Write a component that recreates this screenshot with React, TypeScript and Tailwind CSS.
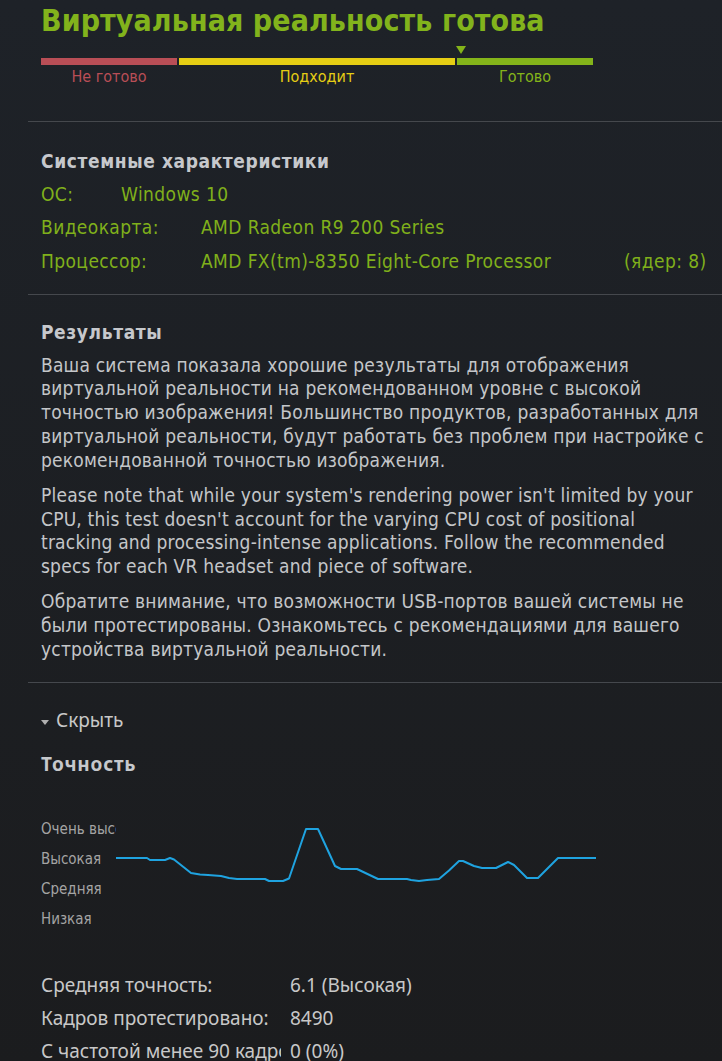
const cond = { fontFamily: "'DejaVu Sans Condensed', 'Liberation Sans Narrow', sans-serif" };
const wide = { fontFamily: "'Noto Sans', 'Open Sans', sans-serif" };

const points: [number, number][] = [
  [0, 43], [31, 43], [34, 45], [49, 45], [54, 43], [58, 44.5], [75, 58], [84, 59.5],
  [92, 60], [105, 61], [113, 63], [121, 64], [149, 64], [153, 66], [167, 66], [173, 63.5],
  [190, 14], [202, 14], [219, 51], [225, 54], [241, 54], [262, 64], [291, 64], [295, 65],
  [303, 66], [311, 65], [323, 64], [333, 55.5], [343, 46], [347, 46], [358, 51], [366, 53],
  [380, 53], [392, 47], [398, 50], [411, 63], [422, 63], [442, 43], [480, 43],
];

function Divider() {
  return <div className="h-px bg-[#45484d]" />;
}

function SpecRow({ label, value, extra, labelWidth }: { label: string; value: string; extra?: string; labelWidth: string }) {
  return (
    <div className="flex h-[33.5px] items-center whitespace-nowrap">
      <span className={labelWidth}>{label}</span>
      <span className="w-[423px]">{value}</span>
      {extra && <span>{extra}</span>}
    </div>
  );
}

export default function App() {
  return (
    <div className="min-h-screen overflow-hidden bg-linear-to-b from-[#1e2228] to-[#1b1c1e] pl-[28px]">
      {/* header */}
      <div className="pl-[13px] pt-[3px] pb-[34px]" style={cond}>
        <h1 className="text-[30px] font-bold leading-[36px] tracking-[0.1px] text-[#82b31c] whitespace-nowrap">
          Виртуальная реальность готова
        </h1>
        <div className="relative mt-[7px] w-[552px] pt-[12px]">
          <div className="absolute left-[415px] top-0 h-0 w-0 border-x-[5.5px] border-t-[8px] border-x-transparent border-t-[#84b41a]" />
          <div className="flex gap-[2px]">
            <div className="flex w-[136px] flex-col items-center">
              <div className="h-[7px] w-full bg-[#b94e56]" />
              <span className="mt-[2px] text-[16px] leading-[20px] text-[#b94e56]">Не готово</span>
            </div>
            <div className="flex w-[276px] flex-col items-center">
              <div className="h-[7px] w-full bg-[#e6ce14]" />
              <span className="mt-[2px] text-[16px] leading-[20px] text-[#e6ce14]">Подходит</span>
            </div>
            <div className="flex w-[136px] flex-col items-center">
              <div className="h-[7px] w-full bg-[#84b41a]" />
              <span className="mt-[2px] text-[16px] leading-[20px] text-[#84b41a]">Готово</span>
            </div>
          </div>
        </div>
      </div>

      <Divider />

      {/* system specs */}
      <div className="pl-[13px] pt-[27px] pb-[16px]" style={cond}>
        <h2 className="text-[19px] font-bold leading-[24px] tracking-[0.6px] text-[#c6c8cc]">Системные характеристики</h2>
        <div className="mt-[4px] text-[19px] tracking-[0.4px] text-[#80b01b]">
          <div className="flex h-[33.5px] items-center whitespace-nowrap">
            <span className="w-[80px]">ОС:</span>
            <span>Windows 10</span>
          </div>
          <SpecRow label="Видеокарта:" value="AMD Radeon R9 200 Series" labelWidth="w-[160px]" />
          <SpecRow label="Процессор:" value="AMD FX(tm)-8350 Eight-Core Processor" extra="(ядер: 8)" labelWidth="w-[160px]" />
        </div>
      </div>

      <Divider />

      {/* results */}
      <div className="pl-[13px] pt-[25px] pb-[20px] text-[#c4c6c9]" style={cond}>
        <h2 className="text-[19px] font-bold leading-[24px] tracking-[0.6px] text-[#c6c8cc]">Результаты</h2>
        <div className="mt-[10px] flex flex-col gap-[11.5px] whitespace-nowrap text-[19px] leading-[23.75px] tracking-[0.2px]">
          <p>
            Ваша система показала хорошие результаты для отображения
            <br />
            виртуальной реальности на рекомендованном уровне с высокой
            <br />
            точностью изображения! Большинство продуктов, разработанных для
            <br />
            виртуальной реальности, будут работать без проблем при настройке с
            <br />
            рекомендованной точностью изображения.
          </p>
          <p>
            Please note that while your system's rendering power isn't limited by your
            <br />
            CPU, this test doesn't account for the varying CPU cost of positional
            <br />
            tracking and processing-intense applications. Follow the recommended
            <br />
            specs for each VR headset and piece of software.
          </p>
          <p>
            Обратите внимание, что возможности USB-портов вашей системы не
            <br />
            были протестированы. Ознакомьтесь с рекомендациями для вашего
            <br />
            устройства виртуальной реальности.
          </p>
        </div>
      </div>

      <Divider />

      {/* fidelity */}
      <div className="pl-[13px] pt-[26px] text-[#c8c8c8]" style={wide}>
        <button className="flex h-[24px] items-center gap-[7px] text-[19px] text-[#c8c8c8]">
          <span className="mt-[3px] h-0 w-0 border-x-[4px] border-t-[5px] border-x-transparent border-t-[#b0b0b0]" />
          Скрыть
        </button>
        <h2 className="mt-[19px] text-[19px] font-bold leading-[24px] tracking-[0.8px] text-[#c6c8cc]">Точность</h2>

        <div className="mt-[39px] flex h-[120px]">
          <div className="w-[75px] overflow-hidden whitespace-nowrap text-[15px] text-[#a4a4a4]" style={cond}>
            <div className="flex h-[30px] items-center">Очень высокая</div>
            <div className="flex h-[30px] items-center">Высокая</div>
            <div className="flex h-[30px] items-center">Средняя</div>
            <div className="flex h-[30px] items-center">Низкая</div>
          </div>
          <svg width="480" height="120" viewBox="0 0 480 120" className="shrink-0">
            <polyline
              points={points.map(([x, y]) => `${x},${y}`).join(" ")}
              fill="none"
              stroke="#1fa3e0"
              strokeWidth="2"
              strokeLinejoin="round"
            />
          </svg>
        </div>

        <div className="mt-[34.5px] text-[19px]">
          {[
            ["Средняя точность:", "6.1 (Высокая)"],
            ["Кадров протестировано:", "8490"],
            ["С частотой менее 90 кадров/с:", "0 (0%)"],
          ].map(([k, v]) => (
            <div key={k} className="flex h-[33px] items-center whitespace-nowrap">
              <span className="mr-[9px] w-[240px] overflow-hidden">{k}</span>
              <span>{v}</span>
            </div>
          ))}
        </div>
      </div>
    </div>
  );
}
